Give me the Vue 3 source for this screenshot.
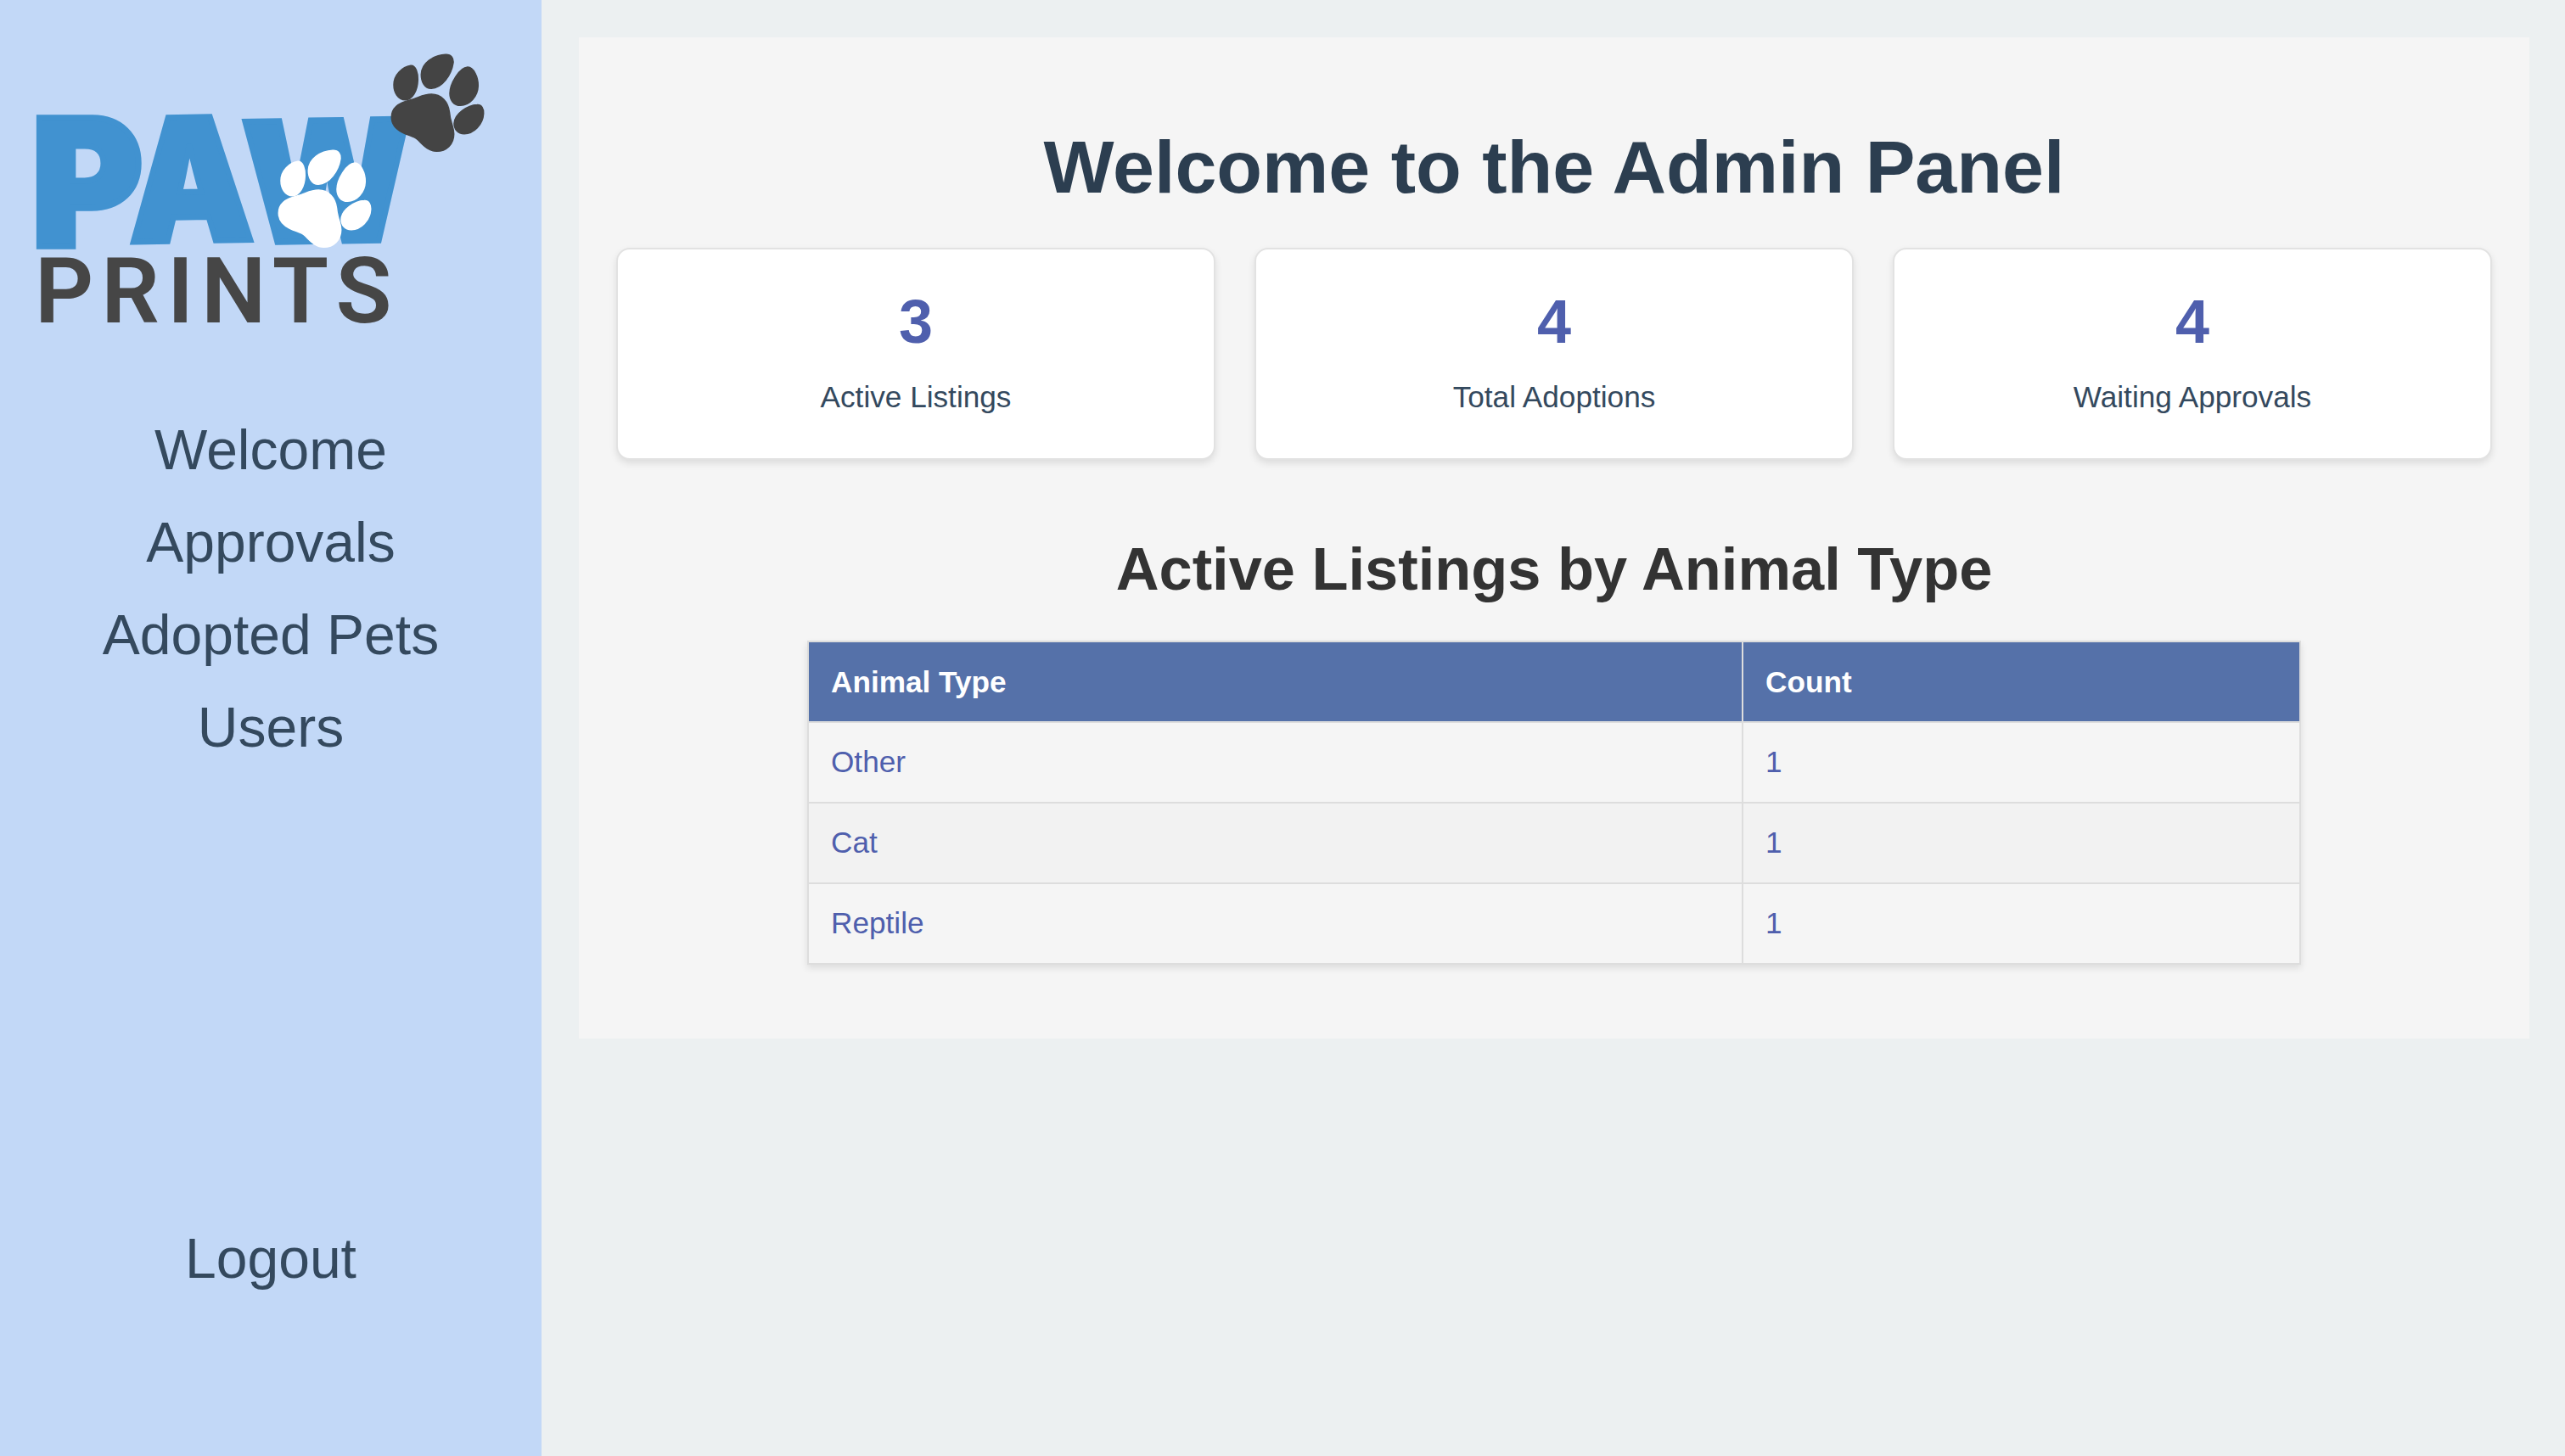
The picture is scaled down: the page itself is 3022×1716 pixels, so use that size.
<template>
  <div class="layout">
    <aside class="sidebar">
      <svg class="logo" viewBox="0 0 640 420" role="img" aria-label="Paw Prints">
        <defs>
          <g id="paw">
            <path d="M485 77.3C491 77 493.5 86 493.3 94C493 107 487 117.7 478.5 117.7C470 117.7 465 109 465 100C465 88 475 79 485 77.3Z" />
            <path d="M526 64.3C533 64 535.5 69 535 74C533 88 522 104.3 509 104.3C501 104.3 497.3 96 497.3 88C497.5 74 512 65 526 64.3Z" />
            <path d="M552 79C559 79 564.5 91 564.3 101C564 114 554 124.3 543.5 124.3C535.5 124.3 531 118 531 110C531 99 542 79.5 552 79Z" />
            <path d="M563 123.5C568.5 123 571 128 570.7 134C570 147 559 157.7 548 157.7C540 157.7 536 152 536 145.5C536.5 134 552 124 563 123.5Z" />
            <path d="M462.3 138C462.3 127 471 121 484 118C494 115.5 499 111 509.3 111C521 111 529 120 530.5 132C531.5 145 535.7 149 535.7 158C535.7 170 527 178.3 515.5 178.3C505 178.3 499 170 493 164.5C488 160 482 160 475 156C467 152 462.3 146 462.3 138Z" />
          </g>
        </defs>
        <text class="paw-letter" transform="translate(38 290) scale(1 1.04)">P</text>
        <text class="paw-letter" transform="translate(154 285) rotate(-1) scale(.92 1)">A</text>
        <text class="paw-letter" transform="translate(288 286) rotate(-1) scale(.92 .98)">W</text>
        <text class="prints" x="42" y="380">PRINTS</text>
        <use href="#paw" fill="#444444" stroke="#444444" stroke-width="1.5" />
        <use href="#paw" fill="#ffffff" stroke="#ffffff" stroke-width="1.5" transform="translate(-133 113)" />
      </svg>
      <nav class="nav">
        <a v-for="item in navItems" :key="item" class="nav-link">{{ item }}</a>
      </nav>
      <a class="nav-link logout">Logout</a>
    </aside>

    <main class="main">
      <section class="panel">
        <h1>Welcome to the Admin Panel</h1>
        <div class="cards">
          <div v-for="card in cards" :key="card.label" class="card">
            <div class="card-num">{{ card.value }}</div>
            <div class="card-label">{{ card.label }}</div>
          </div>
        </div>
        <h2>Active Listings by Animal Type</h2>
        <table>
          <thead>
            <tr>
              <th>Animal Type</th>
              <th>Count</th>
            </tr>
          </thead>
          <tbody>
            <tr v-for="row in rows" :key="row.type">
              <td>{{ row.type }}</td>
              <td>{{ row.count }}</td>
            </tr>
          </tbody>
        </table>
      </section>
    </main>
  </div>
</template>

<script setup>
const navItems = ['Welcome', 'Approvals', 'Adopted Pets', 'Users']

const cards = [
  { value: 3, label: 'Active Listings' },
  { value: 4, label: 'Total Adoptions' },
  { value: 4, label: 'Waiting Approvals' },
]

const rows = [
  { type: 'Other', count: 1 },
  { type: 'Cat', count: 1 },
  { type: 'Reptile', count: 1 },
]
</script>

<style scoped>
.layout {
  display: flex;
  height: 1716px;
  background: #ecf0f1;
  font-family: "Liberation Sans", Arial, sans-serif;
}
.sidebar {
  width: 638px;
  flex-shrink: 0;
  display: flex;
  flex-direction: column;
  align-items: center;
  background: #c2d8f7;
}
.logo {
  display: block;
  width: 640px;
  height: 420px;
  flex-shrink: 0;
}
.paw-letter {
  font-family: Inter, "Liberation Sans", sans-serif;
  font-size: 200px;
  font-weight: 900;
  fill: #4192d0;
  stroke: #4192d0;
  stroke-width: 7px;
}
.prints {
  font-family: Roboto, "Liberation Sans", sans-serif;
  font-size: 108px;
  font-weight: 600;
  letter-spacing: 9px;
  fill: #464646;
}
.nav {
  display: flex;
  flex-direction: column;
  align-items: center;
  margin-top: 56px;
}
.nav-link {
  display: block;
  height: 109px;
  line-height: 109px;
  font-size: 66px;
  color: #34495e;
}
.logout {
  margin-top: auto;
  margin-bottom: 178px;
}
.main {
  flex: 1;
  min-width: 0;
  padding: 44px 42px 0 44px;
}
.panel {
  padding: 46px 44px 87px;
  background: #f5f5f5;
}
h1 {
  margin: 0;
  height: 186px;
  padding-top: 16px;
  line-height: 182px;
  font-size: 88px;
  font-weight: 700;
  text-align: center;
  color: #2c3e50;
}
.cards {
  display: grid;
  grid-template-columns: repeat(3, 1fr);
  gap: 46px;
}
.card {
  box-sizing: border-box;
  height: 250px;
  padding-top: 42px;
  text-align: center;
  background: #fff;
  border: 2px solid #e2e2e2;
  border-radius: 16px;
  box-shadow: 0 4px 8px rgba(0, 0, 0, 0.1);
}
.card-num {
  height: 86px;
  line-height: 86px;
  font-size: 72px;
  font-weight: 700;
  color: #4f5fad;
}
.card-label {
  margin-top: 26px;
  line-height: 40px;
  font-size: 35.2px;
  color: #34495e;
}
h2 {
  margin: 0;
  height: 213px;
  line-height: 258px;
  font-size: 70.4px;
  font-weight: 700;
  text-align: center;
  color: #333;
}
table {
  width: 1760px;
  margin: 0 auto;
  border-collapse: collapse;
  table-layout: fixed;
  font-size: 35.2px;
  box-shadow: 0 4px 8px rgba(0, 0, 0, 0.1);
}
th,
td {
  box-sizing: border-box;
  height: 95px;
  padding: 0 26px;
  text-align: left;
  border: 2px solid #ddd;
}
th:first-child,
td:first-child {
  width: 1101px;
}
th {
  background: #5571a9;
  color: #fff;
  font-weight: 700;
}
td {
  padding-bottom: 2px;
  color: #4f5fad;
}
tbody tr:nth-child(even) {
  background: #f2f2f2;
}
</style>

<style>
html,
body {
  margin: 0;
  background: #ecf0f1;
}
</style>
